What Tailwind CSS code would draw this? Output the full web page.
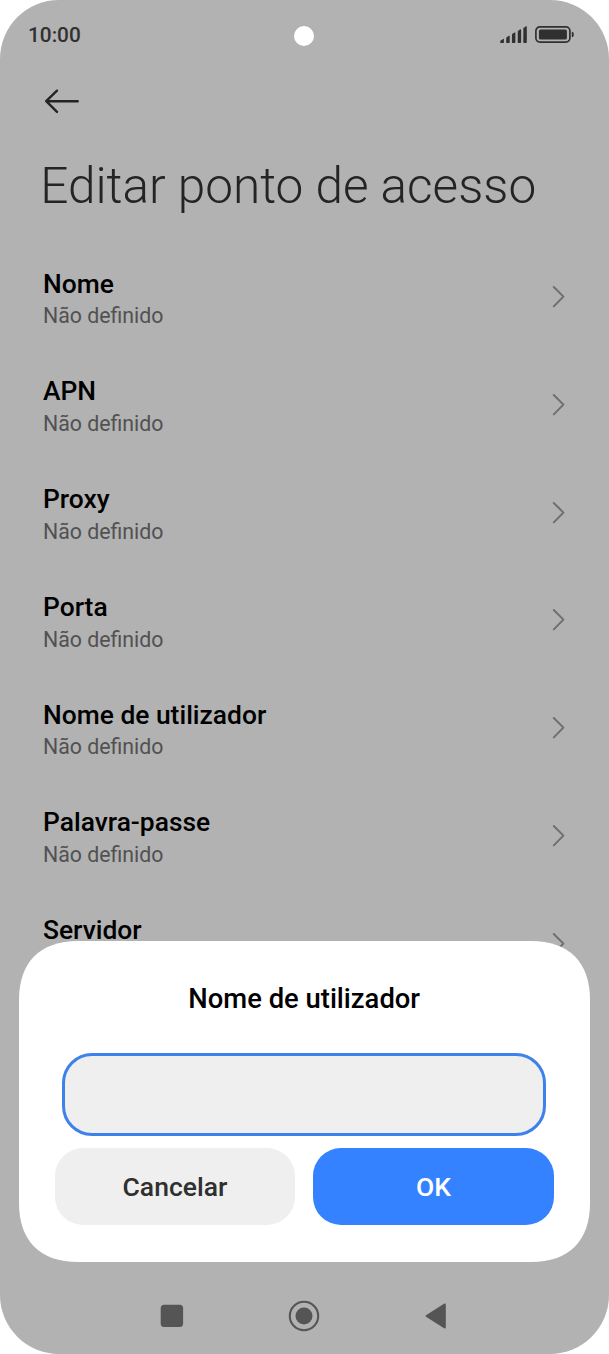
<!DOCTYPE html>
<html lang="pt">
<head>
<meta charset="utf-8">
<title>Editar ponto de acesso</title>
<script src="https://cdn.jsdelivr.net/npm/@tailwindcss/browser@4"></script>
</head>
<body class="bg-white font-['Roboto',sans-serif]">
<div class="relative flex h-[1354px] w-[609px] flex-col overflow-hidden rounded-[59px] bg-[#b2b2b2]">
  <header class="flex h-[70px] items-center justify-between pr-[35px] pl-7">
    <span class="w-[80px] text-[20.8px] leading-6 font-medium text-[#303030]">10:00</span>
    <span class="mt-[2px] size-5 rounded-full bg-white"></span>
    <svg class="h-[18px] w-[75px]" viewBox="0 0 75 18" fill="#303030">
      <path d="M1.3 14.7 4.2 12.9Q4.9 12.7 4.9 13.6V16.4Q4.9 17.1 4.2 17.1H2Q1.2 17.1 1.2 16.4Z"/>
      <path d="M7.3 11.4 9.9 9.7Q10.7 9.4 10.7 10.4V16.3Q10.7 17.1 9.9 17.1H8Q7.2 17.1 7.2 16.3Z"/>
      <path d="M13 8 15.6 6.4Q16.4 6.1 16.4 7V16.3Q16.4 17.1 15.6 17.1H13.7Q12.9 17.1 12.9 16.3Z"/>
      <path d="M18.8 5 21.3 3.3Q22.1 3 22.1 4V16.3Q22.1 17.1 21.3 17.1H19.5Q18.7 17.1 18.7 16.3Z"/>
      <path d="M24.4 1.9 27 .2Q27.8-.1 27.8.8V16.3Q27.8 17.1 27 17.1H25.1Q24.3 17.1 24.3 16.3Z"/>
      <rect x="36.9" y=".9" width="34" height="15.2" rx="4" fill="none" stroke="#303030" stroke-width="1.7"/>
      <rect x="39.9" y="3.5" width="28" height="10" rx="1.6"/>
      <path d="M72.8 5.8Q74.7 5.8 74.7 7.4V9.6Q74.7 11.2 72.8 11.2Z"/>
    </svg>
  </header>
  <div class="flex h-[62px] items-center pl-[43px]">
    <svg class="h-[26px] w-[38px]" viewBox="0 0 38 26" fill="none" stroke="#242424" stroke-width="2.4" stroke-linecap="round" stroke-linejoin="round"><path d="M14 2.7 3.2 13.2 14 23.9M3.2 13.2H34.7"/></svg>
  </div>
  <h1 class="h-[114px] pt-[21px] pl-[40.2px] text-[49.5px] leading-[66px] font-light whitespace-nowrap text-[#242424]">Editar ponto de acesso</h1>
  <ul id="list" class="flex flex-col"></ul>
  <template id="row">
    <li class="flex h-[107.75px] shrink-0 items-start justify-between pt-[21.7px] pr-[43px] pl-[43px]">
      <div>
        <p class="text-[26.4px] leading-8 font-medium text-black"></p>
        <p class="pt-[0.6px] text-[21.3px] leading-8 text-[#515151]">Não definido</p>
      </div>
      <svg class="mt-[16.4px] h-[26px] w-[14px]" viewBox="0 0 14 26" fill="none" stroke="#6f6f6f" stroke-width="2" stroke-linecap="round" stroke-linejoin="round"><path d="M1.8 3 11.4 12.6 1.8 22.4"/></svg>
    </li>
  </template>

  <section class="absolute top-[941px] left-[18.7px] h-[321px] w-[571px]">
    <svg class="absolute inset-0 size-full" viewBox="0 0 571 321" fill="#fff"><path d="M0 59C0 21 21 0 59 0H512C550 0 571 21 571 59V262C571 300 550 321 512 321H59C21 321 0 300 0 262Z"/></svg>
    <div class="relative flex flex-col px-9 pt-[42px]">
      <h2 class="text-center text-[27.4px] leading-8 font-medium text-black">Nome de utilizador</h2>
      <div class="mt-[38px] mr-[7.5px] ml-[7.5px] h-[82.5px] shrink-0 rounded-[30px] border-[3px] border-[#3d81eb] bg-[#efefef]"></div>
      <div class="mt-[12.5px] grid grid-cols-2 gap-[18px]">
        <button class="h-[77px] rounded-[28px] bg-[#efefef] pt-px text-[26.5px] font-medium text-[#303030]">Cancelar</button>
        <button class="h-[77px] rounded-[28px] bg-[#3482ff] pt-px text-[26.5px] font-medium text-white">OK</button>
      </div>
    </div>
  </section>

  <nav class="absolute inset-x-0 bottom-0 flex h-[77px] items-center pl-[156.6px]">
    <svg class="size-[30px]" viewBox="0 0 30 30"><rect x="3.7" y="3.7" width="22.4" height="22.4" rx="3.5" fill="#555"/></svg>
    <svg class="ml-[101.4px] size-8" viewBox="0 0 32 32"><circle cx="16" cy="16" r="14.2" fill="none" stroke="#555" stroke-width="2.1"/><circle cx="16" cy="16" r="8.5" fill="#555"/></svg>
    <svg class="ml-[101px] size-[30px]" viewBox="0 0 30 30"><path d="M5 14.2 23 2.8Q24.8 2 24.8 3.8V26.3Q24.8 28 23.1 27.2L5 15.8Q4 15 5 14.2Z" fill="#555"/></svg>
  </nav>
</div>
<script>
  const row = document.getElementById('row');
  const list = document.getElementById('list');
  for (const name of ['Nome', 'APN', 'Proxy', 'Porta', 'Nome de utilizador', 'Palavra-passe', 'Servidor']) {
    const item = row.content.cloneNode(true);
    item.querySelector('p').textContent = name;
    list.append(item);
  }
</script>
</body>
</html>
